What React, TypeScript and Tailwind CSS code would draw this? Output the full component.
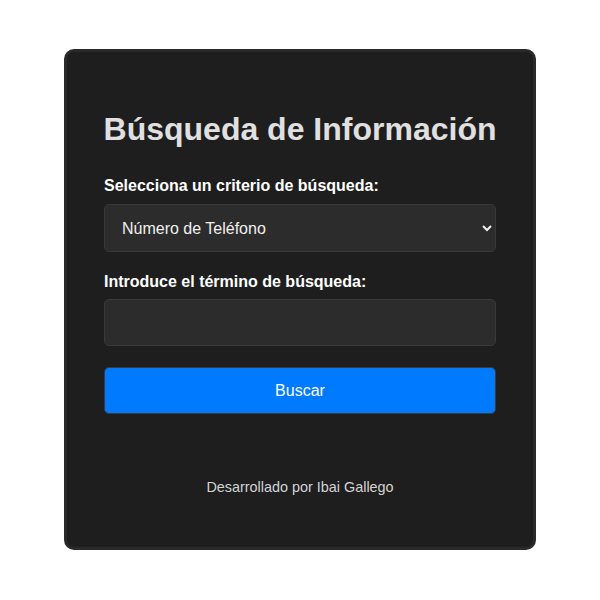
import { useState } from 'react';

export default function App() {
  const [criterio, setCriterio] = useState('telefono');
  const [termino, setTermino] = useState('');

  return (
    <div className="min-h-[600px] bg-white font-['Liberation_Sans',Arial,sans-serif] pt-[49px]">
      <div className="mx-auto w-[472px] rounded-[10px] border-[3px] border-[#2a2a2a] bg-[#1e1e1e] px-[37px] pt-[37px] pb-[51px]">
        <h1 className="-mx-[20px] mt-[22px] whitespace-nowrap text-center text-[32px] font-bold leading-[37px] text-[#e0e0e0]">
          Búsqueda de Información
        </h1>

        <form
          className="mt-[29px] flex flex-col"
          onSubmit={(e) => e.preventDefault()}
        >
          <label className="text-[16px] font-bold leading-[18px] text-white">
            Selecciona un criterio de búsqueda:
          </label>
          <select
            value={criterio}
            onChange={(e) => setCriterio(e.target.value)}
            className="mt-[9px] h-[48px] w-full rounded-[5px] border border-[#3a3a3a] bg-[#2c2c2c] px-[13px] text-[16px] text-[#f0f0f0] [color-scheme:dark] outline-none"
          >
            <option value="telefono">Número de Teléfono</option>
            <option value="email">Correo Electrónico</option>
            <option value="nombre">Nombre</option>
          </select>

          <label className="mt-[21px] text-[16px] font-bold leading-[18px] text-white">
            Introduce el término de búsqueda:
          </label>
          <input
            value={termino}
            onChange={(e) => setTermino(e.target.value)}
            className="mt-[8px] h-[47px] w-full rounded-[5px] border border-[#3a3a3a] bg-[#2c2c2c] px-[12px] text-[16px] text-[#f0f0f0] outline-none"
          />

          <button
            type="submit"
            className="mt-[21px] h-[47px] w-full rounded-[5px] border border-[#3a3a3a] bg-[#007bff] text-[16px] text-white"
          >
            Buscar
          </button>
        </form>

        <p className="mt-[65px] text-center text-[14.4px] leading-[17px] text-[#d4d4d4]">
          Desarrollado por Ibai Gallego
        </p>
      </div>
    </div>
  );
}
